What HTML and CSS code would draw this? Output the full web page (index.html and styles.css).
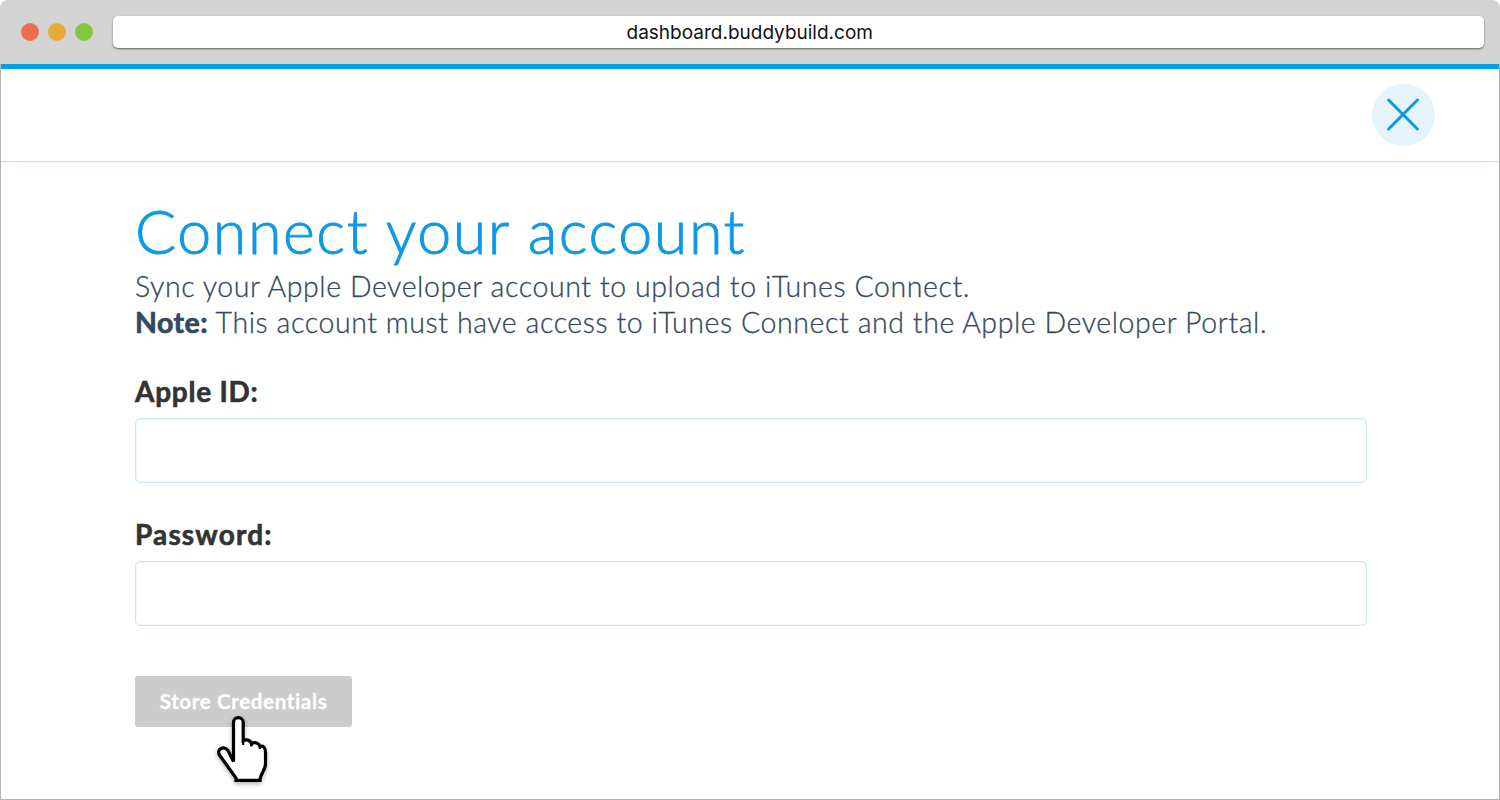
FILE: index.html
```html
<!DOCTYPE html>
<html lang="en">
<head>
<meta charset="utf-8">
<title>Connect your account</title>
<link rel="stylesheet" href="styles.css">
</head>
<body>
<div class="window">
  <div class="titlebar">
    <div class="lights">
      <span class="light light-close"></span>
      <span class="light light-min"></span>
      <span class="light light-max"></span>
    </div>
    <div class="address"><span class="url">dashboard.buddybuild.com</span></div>
  </div>
  <div class="page">
    <header class="topbar">
      <button class="close" aria-label="Close">
        <svg width="35" height="34" viewBox="0 0 35 34"><path d="M2.600 2 31.400 31M31.400 2 2.600 31" fill="none" stroke="#0f98e5" stroke-width="3" stroke-linecap="round"/></svg>
      </button>
    </header>
    <main class="content">
      <h1 class="title">Connect your account</h1>
      <p class="lead">Sync your Apple Developer account to upload to iTunes Connect.</p>
      <p class="lead lead-note"><b class="note">Note:</b> This account must have access to iTunes Connect and the Apple Developer Portal.</p>
      <form class="form">
        <label class="label" for="apple-id">Apple ID:</label>
        <input class="field" id="apple-id" type="text">
        <label class="label label-password" for="password">Password:</label>
        <input class="field" id="password" type="password">
        <button class="submit" type="button">Store Credentials
          <svg class="pointer" width="62" height="78" viewBox="0 0 62 78"><path d="M23.500 51.500V12.500C23.500 6 33.200 6 33.200 12.500V30.500C36 29 40.500 30 41.500 33.500C45 31.800 49 33 50 36.500C53 35.500 55.500 37.500 55.500 42V54C55.500 60 50 64 50 70.300H26V68L9.500 45C6 40 13.500 34.500 18 40.500Z" fill="#fff" stroke="#000" stroke-width="3.200"/><path d="M33.200 30V35M41.500 33V36.500M50 36V39" stroke="#000" stroke-width="2.200" fill="none"/></svg>
        </button>
      </form>
    </main>
  </div>
</div>
</body>
</html>
```
FILE: styles.css
```css
* { box-sizing: border-box; }
body { margin: 0; background: #fff; font-family: Lato, "Liberation Sans", sans-serif; }
.window { display: flex; flex-direction: column; height: 800px; overflow: hidden; }
.titlebar { display: flex; align-items: center; height: 64px; padding: 0 16px 0 20.600px; background: #d3d3d3; border-radius: 8px 8px 0 0; }
.lights { display: flex; gap: 9px; width: 92.900px; }
.light { width: 18px; height: 18px; border-radius: 50%; }
.light-close { background: #ec6f4d; }
.light-min { background: #e7aa38; }
.light-max { background: #86c53e; }
.address { flex: 1; height: 32px; padding-right: 98px; border-radius: 5px; background: #fff; box-shadow: 0 1px 2px rgba(0,0,0,.55); text-align: center; line-height: 33px; }
.url { font-family: Inter, sans-serif; font-size: 19px; color: #111; }
.page { flex: 1; display: flex; flex-direction: column; border: 1px solid #b4b4b4; border-top: 0; background: #fff; }
.topbar { display: flex; justify-content: flex-end; height: 98px; padding: 15px 64px 0 0; border-top: 5px solid #009fe8; border-bottom: 1px solid #c5e5f8; box-shadow: 0 1px #e8f5fd; }
.close { display: flex; align-items: center; justify-content: center; width: 63px; height: 62px; padding: 0; border: 0; border-radius: 50%; background: #e5f4fc; }
.content { padding: 31.500px 132px 0 134px; }
.title { margin: 0; font-size: 61px; line-height: 74px; font-weight: 300; color: #0f98e5; letter-spacing: 1.550px; -webkit-text-stroke: .9px #0f98e5; white-space: nowrap; }
.lead { margin: 0; font-size: 28.500px; line-height: 36px; font-weight: 300; color: #34495e; letter-spacing: .58px; -webkit-text-stroke: .3px #34495e; white-space: nowrap; }
.lead-note { letter-spacing: .57px; }
.note { font-weight: 700; letter-spacing: .5px; -webkit-text-stroke-width: .7px; }
.form { display: flex; flex-direction: column; margin-top: 33px; }
.label { font-size: 28px; line-height: 36px; font-weight: 700; color: #333; letter-spacing: .75px; -webkit-text-stroke: .6px #333; align-self: flex-start; }
.label-password { letter-spacing: 1.150px; }
.field { width: 1232px; height: 65px; margin: 9.500px 0 32.500px; padding: 0 16px; border: 1px solid #c8e7fa; border-radius: 5px; background: #fff; box-shadow: inset 0 0 0 1px #edf7fe; font: inherit; font-size: 28px; outline: 0; }
.submit { position: relative; align-self: flex-start; width: 217px; height: 51px; margin-top: 17px; padding: 0; border: 0; border-radius: 3px; background: #ccc; color: #fff; font: 700 20.500px/51px Lato, sans-serif; letter-spacing: .65px; -webkit-text-stroke: .3px #fff; white-space: nowrap; }
.pointer { position: absolute; left: 75px; top: 34.500px; filter: drop-shadow(0 2px 2px rgba(0,0,0,.3)); }
```
